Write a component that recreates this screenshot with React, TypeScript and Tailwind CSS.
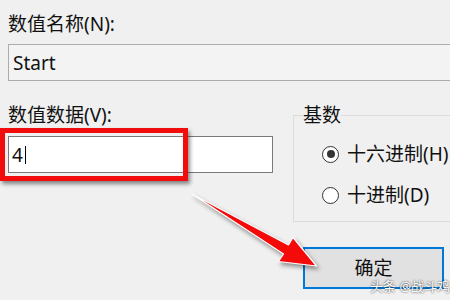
import React from "react";

function Radio({ checked, label }: { checked?: boolean; label: string }) {
  return (
    <div className="flex items-center h-[24px]">
      <span className="w-[17px] h-[17px] rounded-full border border-[#333] bg-white flex items-center justify-center">
        {checked && <span className="w-[8px] h-[8px] rounded-full bg-[#333]" />}
      </span>
      <span className="ml-[8px] whitespace-nowrap">{label}</span>
    </div>
  );
}

export default function App() {
  return (
    <div className="relative w-[450px] h-[300px] overflow-hidden bg-[#f0f0f0] text-[#111] text-[19px] leading-[24px] font-['Noto_Sans','Noto_Sans_CJK_SC',sans-serif]">
      <div className="pl-[8px] pt-[12px]">
        <div>数值名称(N):</div>
        <div className="mt-[8px] w-[470px] h-[37px] border border-[#acacac] bg-[#f3f3f3] flex items-center pl-[4px]">
          Start
        </div>

        <div className="mt-[22px] flex">
          {/* left column */}
          <div className="w-[265px] shrink-0">
            <div>数值数据(V):</div>
            <div className="relative mt-[9px]">
              <div className="h-[37px] border border-[#7a7a7a] bg-white flex items-center pl-[3px]">
                4<span className="ml-[2px] w-px h-[18px] bg-black" />
              </div>
              <div className="absolute -left-[8px] -top-[8px] w-[188px] h-[53px] border-[5px] border-[#f20d0d] shadow-[2px_3px_4px_rgba(0,0,0,0.45)]" />
            </div>
          </div>

          {/* right column */}
          <div className="ml-[20px] shrink-0">
            <fieldset className="w-[200px] h-[119px] border border-[#dcdcdc] px-[9px]">
              <legend className="px-0 leading-[24px]">基数</legend>
              <div className="ml-[19px] mt-[15px] flex flex-col gap-[17px]">
                <Radio checked label="十六进制(H)" />
                <Radio label="十进制(D)" />
              </div>
            </fieldset>
            <button className="ml-[10px] mt-[25px] w-[141px] h-[42px] border-2 border-[#0078d7] bg-[#e1e1e1] flex items-center justify-center text-[19px]">
              确定
            </button>
          </div>
        </div>
      </div>

      {/* red arrow */}
      <svg
        className="absolute inset-0 pointer-events-none drop-shadow-[2px_3px_2px_rgba(0,0,0,0.4)]"
        width="450"
        height="300"
        viewBox="0 0 450 300"
      >
        <polygon
          points="192,194 288.5,245 293,237.5 316.5,266 278.5,261.5 283.5,254"
          fill="#f50a0a"
          stroke="#ffffff"
          strokeWidth="1.2"
          strokeLinejoin="round"
        />
      </svg>

      {/* watermark */}
      <div className="absolute left-[370px] top-[278px] text-[13px] leading-[16px] text-white whitespace-nowrap [text-shadow:0_0_2px_rgba(0,0,0,0.9)]">
        头条 @战斗鸡
      </div>
    </div>
  );
}
